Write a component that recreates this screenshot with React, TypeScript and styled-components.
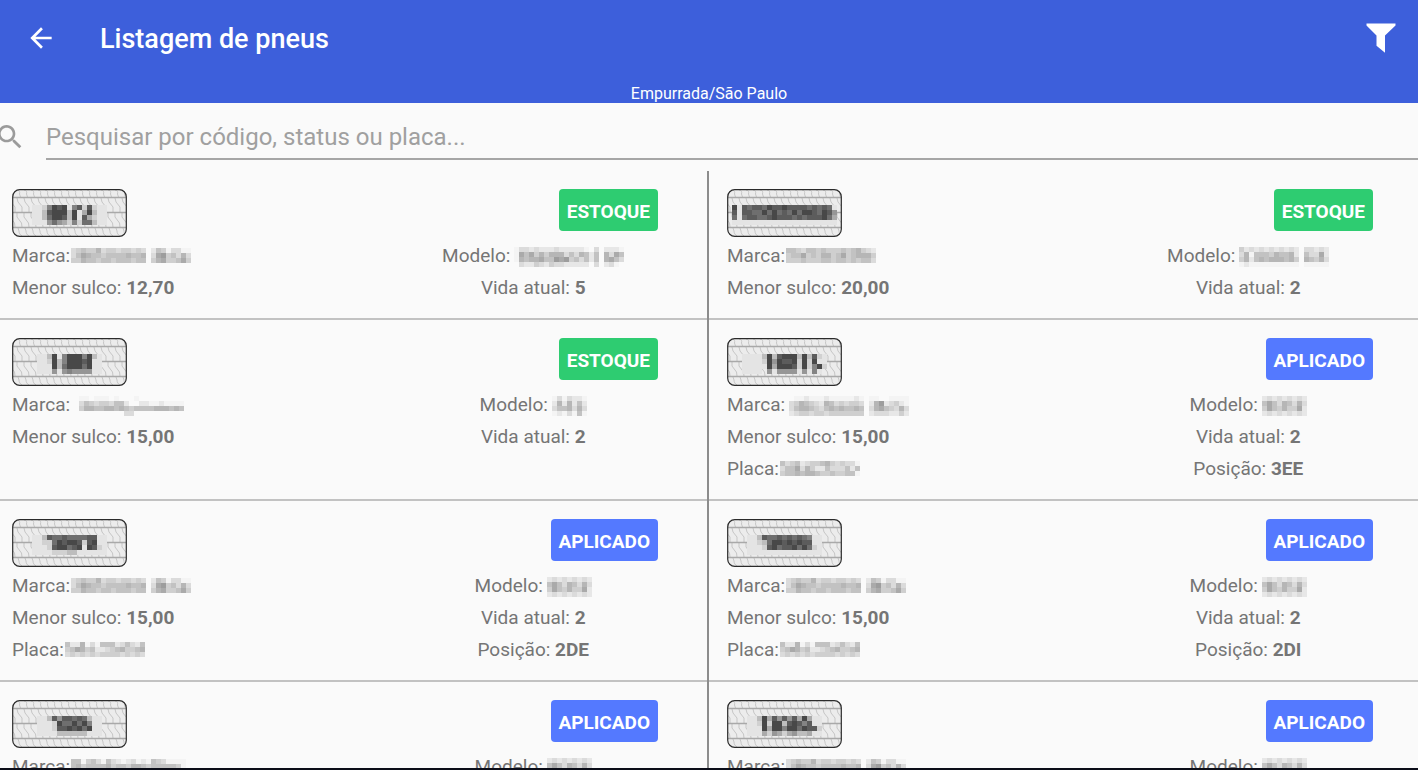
import React from "react";
import styled, { createGlobalStyle } from "styled-components";

const GlobalStyle = createGlobalStyle`
  *, *::before, *::after { box-sizing: border-box; }
  body {
    margin: 0;
    background: #fafafa;
    color: #757575;
    font-family: Roboto, "Liberation Sans", sans-serif;
    font-size: 19px;
  }
`;

const Screen = styled.div`
  display: flex;
  flex-direction: column;
  height: 100vh;
  overflow: hidden;
  border-bottom: 2px solid #0b0d18;
`;

const Header = styled.header`
  flex: none;
  display: flex;
  flex-direction: column;
  background: #3d5fdb;
  color: #fff;
`;

const Toolbar = styled.div`
  display: flex;
  align-items: center;
  height: 76px;
  padding: 0 16px 0 20px;
`;

const IconButton = styled.button`
  display: flex;
  align-items: center;
  justify-content: center;
  width: 42px;
  height: 42px;
  padding: 0;
  border: 0;
  background: none;
  color: inherit;
  cursor: pointer;
`;

const Title = styled.h1`
  flex: 1;
  margin: 0 0 0 38px;
  padding-top: 2px;
  font-size: 27px;
  font-weight: 500;
  line-height: 36px;
`;

const Unit = styled.p`
  margin: 8px 0 0;
  font-size: 16px;
  line-height: 19px;
  text-align: center;
`;

const SearchBar = styled.label`
  flex: none;
  display: flex;
  align-items: flex-start;
  padding: 11px 0;
  color: #9b9b9b;
`;

const SearchIcon = styled.svg`
  flex: none;
  width: 32px;
  height: 32px;
  margin: 7px 20px 0 -6px;
`;

const SearchInput = styled.input`
  flex: 1;
  min-width: 0;
  height: 46px;
  padding: 2px 0 0;
  border: 0;
  border-bottom: 2px solid #a6a6a6;
  outline: 0;
  background: none;
  color: #424242;
  font: inherit;
  font-size: 24px;
  &::placeholder { color: #a0a0a0; opacity: 1; }
`;

const List = styled.ul`
  flex: 1;
  min-height: 0;
  margin: 0 -4px 0 0;
  padding: 0;
  overflow: hidden;
  list-style: none;
`;

const Row = styled.li`
  display: flex;
  border-bottom: 2px solid #c2c2c2;
`;

const Card = styled.article`
  box-sizing: content-box;
  flex: 1 1 0;
  min-width: 0;
  padding: 18px 0 14px 12px;
  & + & {
    padding-left: 18px;
    border-left: 2px solid #8c8c8c;
    margin-bottom: -2px;
    padding-bottom: 16px;
  }
`;

const CardTop = styled.div`
  display: flex;
  align-items: flex-start;
  justify-content: space-between;
  margin-bottom: 3px;
  padding-right: 49px;
`;

const TirePlate = styled.svg`
  display: block;
  width: 115px;
  height: 48px;
`;

const Badge = styled.span<{ $status: Status }>`
  height: 42px;
  padding: 0 8px;
  border-radius: 4px;
  background: ${(p) => (p.$status === "ESTOQUE" ? "#2ecc71" : "#5479ff")};
  color: #fff;
  font-weight: 700;
  line-height: 45px;
`;

const Details = styled.div`
  display: grid;
  grid-template-columns: 1fr 1fr;
`;

const Detail = styled.p<{ $centered?: boolean }>`
  grid-column: ${(p) => (p.$centered ? 2 : 1)};
  height: 32px;
  margin: 0;
  line-height: 32px;
  text-align: ${(p) => (p.$centered ? "center" : "left")};
  white-space: nowrap;
`;

const Mask = styled.svg<{ $tall: boolean }>`
  margin-left: ${(p) => (p.$tall ? 4 : 1)}px;
  vertical-align: ${(p) => (p.$tall ? -5 : -1)}px;
  shape-rendering: crispEdges;
`;

type Status = "ESTOQUE" | "APLICADO";
type Grid = string[];

const CELL = 5;

/* Every digit is the darkness of one cell, 0 being empty. */
function Cells({ grid, from, to, x = 0, y = 0 }: { grid: Grid; from: number; to: number; x?: number; y?: number }) {
  return (
    <g shapeRendering="crispEdges">
      {grid.flatMap((line, r) =>
        [...line].map((c, i) => {
          const level = Number(c);
          if (!level) return null;
          const v = Math.round(from + ((to - from) * (level - 0.5)) / 8.5);
          return (
            <rect key={`${r}-${i}`} x={x + i * CELL} y={y + r * CELL} width={CELL} height={CELL} fill={`rgb(${v},${v},${v})`} />
          );
        })
      )}
    </g>
  );
}

function Masked({ grid }: { grid: Grid }) {
  const w = grid[0].length * CELL;
  const h = grid.length * CELL;
  return (
    <Mask $tall={grid.length > 3} width={w} height={h} viewBox={`0 0 ${w} ${h}`} aria-hidden="true">
      <Cells grid={grid} from={250} to={145} />
    </Mask>
  );
}

const steps = Array.from({ length: 17 }, (_, i) => i * 7 - 2);

function Tire({ code }: { code: Grid }) {
  const x = Math.round((115 - code[0].length * CELL) / 2);
  return (
    <TirePlate viewBox="0 0 115 48" aria-hidden="true">
      <defs>
        <clipPath id="plate">
          <rect x="1" y="1" width="113" height="46" rx="7" />
        </clipPath>
      </defs>
      <rect x="0.7" y="0.7" width="113.6" height="46.6" rx="7" fill="#ececec" />
      <g clipPath="url(#plate)" fill="none" stroke="#c6c6c6" strokeWidth="1">
        {steps.map((s) => (
          <g key={s}>
            <path d={`M${s} 1c2.5 0 3 2 2.5 4l1 3`} />
            <path d={`M${s} 9l1 4 4 5 0 5`} />
            <path d={`M${s} 24l0 4 4.5 6 .5 4`} />
            <path d={`M${s + 1} 39l1 3c0 2 1 4 3 5`} />
          </g>
        ))}
        <path d="M0 8.5H115M0 23.5H115M0 38.5H115" stroke="#a9a9a9" strokeWidth="1.3" />
      </g>
      <Cells grid={code} from={238} to={72} x={x} y={16} />
      <rect x="0.7" y="0.7" width="113.6" height="46.6" rx="7" fill="none" stroke="#2b2b2b" strokeWidth="1.2" />
    </TirePlate>
  );
}

const CODES: Record<string, Grid> = {
  a: ["112698916828211", "113899939149311", "113799839184211", "111575426277311"],
  b: ["918788798898888787871", "818877979787979987985", "717887789888787888974", "111111111111111111111"],
  c: ["1139169996931", "1129369998911", "1119379997911", "1115156555511"],
  d: ["11113938999393821", "11112959889292911", "11111949998292692", "11110515555151610"],
  e: ["113877877778811", "112279899828911", "111289978919821", "111122233111111"],
  f: ["113877878787611", "112379989898811", "111289788979721", "111111111111111"],
  g: ["1138588787311", "1112977979611", "1112889897911", "1111333333111"],
  h: ["113948585849411", "112929938986811", "111949969979882", "111425424533411"],
};

const WORDS: Record<string, Grid> = {
  michelin: ["345446344344343025413311", "357655455556556037845363", "446554554555455046744574"],
  michelinTall: ["011211121111121011001111", "346543265343443026823421", "356654356565565036754363", "234434434444444023332242"],
  michelinCaps: ["554355454445456432", "455745466457456664", "444544455455454553"],
  tests: ["0110111010001000000000", "0354344355200221121111", "0466556656545555666565", "0000000000330000000000"],
  bridge: ["55145315321231215431111", "56455556455466545555541", "45555555556455554555554"],
  primacy: ["1332322232222210302221", "1757464666353652506375", "1656675587845352506753", "0322432433222220302310"],
  xmulti: ["423232323232033232", "361555465562053372", "462565666564065463", "121111111111011111"],
  m416: ["1313221", "2626252", "3556363", "1213151"],
  xz: ["232323232", "575365363", "475464472", "232323232"],
  plate: ["5345234456434331", "3557364225333525", "4556566544544551"],
  plateTall: ["5226131555235325", "4576452234564456", "3434343444434343"],
};

interface Tyre {
  code: string;
  status: Status;
  brand: string;
  model: string;
  groove: string;
  life: string;
  plate?: string;
  position?: string;
}

const tyres: Tyre[][] = [
  [
    { code: "a", status: "ESTOQUE", brand: "michelin", model: "primacy", groove: "12,70", life: "5" },
    { code: "b", status: "ESTOQUE", brand: "michelinCaps", model: "xmulti", groove: "20,00", life: "2" },
  ],
  [
    { code: "c", status: "ESTOQUE", brand: "tests", model: "m416", groove: "15,00", life: "2" },
    { code: "d", status: "APLICADO", brand: "michelinTall", model: "xz", groove: "15,00", life: "2", plate: "plate", position: "3EE" },
  ],
  [
    { code: "e", status: "APLICADO", brand: "michelin", model: "xz", groove: "15,00", life: "2", plate: "plateTall", position: "2DE" },
    { code: "f", status: "APLICADO", brand: "michelin", model: "xz", groove: "15,00", life: "2", plate: "plateTall", position: "2DI" },
  ],
  [
    { code: "g", status: "APLICADO", brand: "bridge", model: "xz", groove: "15,00", life: "2" },
    { code: "h", status: "APLICADO", brand: "michelin", model: "xz", groove: "15,00", life: "2" },
  ],
];

function TyreCard({ tyre }: { tyre: Tyre }) {
  return (
    <Card>
      <CardTop>
        <Tire code={CODES[tyre.code]} />
        <Badge $status={tyre.status}>{tyre.status}</Badge>
      </CardTop>
      <Details>
        <Detail>Marca:<Masked grid={WORDS[tyre.brand]} /></Detail>
        <Detail $centered>Modelo:<Masked grid={WORDS[tyre.model]} /></Detail>
        <Detail>Menor sulco: <strong>{tyre.groove}</strong></Detail>
        <Detail $centered>Vida atual: <strong>{tyre.life}</strong></Detail>
        {tyre.plate && <Detail>Placa:<Masked grid={WORDS[tyre.plate]} /></Detail>}
        {tyre.position && <Detail $centered>Posição: <strong>{tyre.position}</strong></Detail>}
      </Details>
    </Card>
  );
}

export default function App() {
  return (
    <Screen>
      <GlobalStyle />
      <Header>
        <Toolbar>
          <IconButton aria-label="Voltar">
            <svg width="32" height="32" viewBox="0 0 24 24" fill="currentColor">
              <path d="M20 11H7.83l5.59-5.59L12 4l-8 8 8 8 1.41-1.41L7.83 13H20v-2z" />
            </svg>
          </IconButton>
          <Title>Listagem de pneus</Title>
          <IconButton aria-label="Filtrar">
            <svg width="30" height="30" viewBox="0 0 30 30" fill="currentColor">
              <path d="M.5.5h29v2L19 12.5v17.3l-8.5-7V12.5L.5 2.5z" />
            </svg>
          </IconButton>
        </Toolbar>
        <Unit>Empurrada/São Paulo</Unit>
      </Header>
      <SearchBar>
        <SearchIcon viewBox="0 0 24 24" fill="currentColor" aria-hidden="true">
          <path d="M15.5 14h-.79l-.28-.27C15.41 12.59 16 11.11 16 9.5 16 5.91 13.09 3 9.5 3S3 5.91 3 9.5 5.91 16 9.5 16c1.61 0 3.09-.59 4.23-1.57l.27.28v.79l5 4.99L20.49 19l-4.99-5zm-6 0C7.01 14 5 11.99 5 9.5S7.01 5 9.5 5 14 7.01 14 9.5 11.99 14 9.5 14z" />
        </SearchIcon>
        <SearchInput type="text" aria-label="Pesquisar" placeholder="Pesquisar por código, status ou placa..." />
      </SearchBar>
      <List>
        {tyres.map((pair, i) => (
          <Row key={i}>
            {pair.map((tyre) => (
              <TyreCard key={tyre.code} tyre={tyre} />
            ))}
          </Row>
        ))}
      </List>
    </Screen>
  );
}
